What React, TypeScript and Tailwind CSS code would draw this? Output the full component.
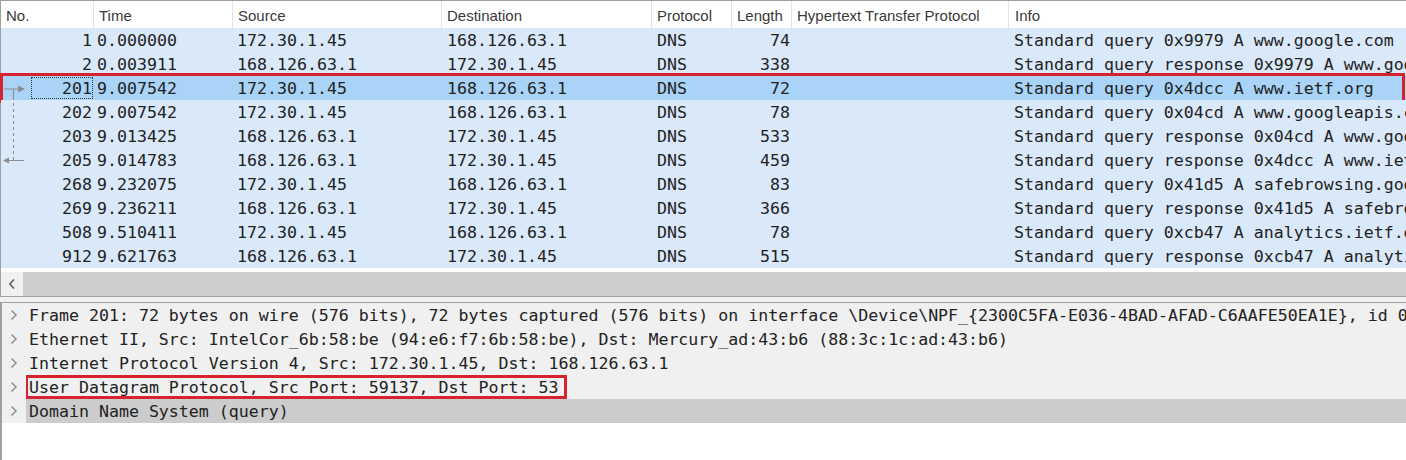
const rows = [
  { no: "1", time: "0.000000", src: "172.30.1.45", dst: "168.126.63.1", proto: "DNS", len: "74", info: "Standard query 0x9979 A www.google.com" },
  { no: "2", time: "0.003911", src: "168.126.63.1", dst: "172.30.1.45", proto: "DNS", len: "338", info: "Standard query response 0x9979 A www.google.com A 142.250.196.100" },
  { no: "201", time: "9.007542", src: "172.30.1.45", dst: "168.126.63.1", proto: "DNS", len: "72", info: "Standard query 0x4dcc A www.ietf.org", selected: true },
  { no: "202", time: "9.007542", src: "172.30.1.45", dst: "168.126.63.1", proto: "DNS", len: "78", info: "Standard query 0x04cd A www.googleapis.com" },
  { no: "203", time: "9.013425", src: "168.126.63.1", dst: "172.30.1.45", proto: "DNS", len: "533", info: "Standard query response 0x04cd A www.googleapis.com" },
  { no: "205", time: "9.014783", src: "168.126.63.1", dst: "172.30.1.45", proto: "DNS", len: "459", info: "Standard query response 0x4dcc A www.ietf.org" },
  { no: "268", time: "9.232075", src: "172.30.1.45", dst: "168.126.63.1", proto: "DNS", len: "83", info: "Standard query 0x41d5 A safebrowsing.googleapis.com" },
  { no: "269", time: "9.236211", src: "168.126.63.1", dst: "172.30.1.45", proto: "DNS", len: "366", info: "Standard query response 0x41d5 A safebrowsing.googleapis.com" },
  { no: "508", time: "9.510411", src: "172.30.1.45", dst: "168.126.63.1", proto: "DNS", len: "78", info: "Standard query 0xcb47 A analytics.ietf.org" },
  { no: "912", time: "9.621763", src: "168.126.63.1", dst: "172.30.1.45", proto: "DNS", len: "515", info: "Standard query response 0xcb47 A analytics.ietf.org" },
];

const details = [
  "Frame 201: 72 bytes on wire (576 bits), 72 bytes captured (576 bits) on interface \\Device\\NPF_{2300C5FA-E036-4BAD-AFAD-C6AAFE50EA1E}, id 0",
  "Ethernet II, Src: IntelCor_6b:58:be (94:e6:f7:6b:58:be), Dst: Mercury_ad:43:b6 (88:3c:1c:ad:43:b6)",
  "Internet Protocol Version 4, Src: 172.30.1.45, Dst: 168.126.63.1",
  "User Datagram Protocol, Src Port: 59137, Dst Port: 53",
  "Domain Name System (query)",
];

function Chevron() {
  return (
    <svg width="8" height="12" viewBox="0 0 8 12" className="shrink-0">
      <path d="M1.5 1.5 L6 6 L1.5 10.5" fill="none" stroke="#8a8a8a" strokeWidth="1.4" />
    </svg>
  );
}

function HeaderCell({ w, label }: { w: string; label: string }) {
  return (
    <div className={`${w} shrink-0 h-full pl-[5px] pt-[3px] flex items-center border-r border-[#e3e3e3]`}>{label}</div>
  );
}

export default function App() {
  return (
    <div className="w-[1406px] h-[460px] bg-white overflow-hidden flex flex-col text-[#1e1e1e]">
      {/* packet list */}
      <div className="relative border-t border-l border-[#a0a0a0] shrink-0">
        <div className="flex h-[27px] text-[15px] text-[#3a3a3a] font-['Liberation_Sans',sans-serif]">
          <HeaderCell w="w-[93px]" label="No." />
          <HeaderCell w="w-[139px]" label="Time" />
          <HeaderCell w="w-[209px]" label="Source" />
          <HeaderCell w="w-[210px]" label="Destination" />
          <HeaderCell w="w-[80px]" label="Protocol" />
          <HeaderCell w="w-[60px]" label="Length" />
          <HeaderCell w="w-[217px]" label="Hypertext Transfer Protocol" />
          <div className="flex-1 pl-[6px] pt-[3px] flex items-center">Info</div>
        </div>
        <div className="font-['DejaVu_Sans_Mono',monospace] text-[16.6px] leading-[23px] text-[#222]">
          {rows.map((r) => (
            <div key={r.no} className={`relative flex h-[24px] pt-[1px] whitespace-nowrap ${r.selected ? "bg-[#a9d3f7]" : "bg-[#dae9fa]"}`}>
              <div className="w-[93px] shrink-0 pr-[2px] text-right relative">
                {r.selected && (
                  <div className="absolute left-[30px] right-[1px] top-0 bottom-[1px] border border-dotted border-[#333]" />
                )}
                <span className="relative">{r.no}</span>
              </div>
              <div className="w-[139px] shrink-0 pl-[3px]">{r.time}</div>
              <div className="w-[209px] shrink-0 pl-[4px]">{r.src}</div>
              <div className="w-[210px] shrink-0 pl-[5px]">{r.dst}</div>
              <div className="w-[80px] shrink-0 pl-[5px]">{r.proto}</div>
              <div className="w-[60px] shrink-0 pr-[2px] text-right">{r.len}</div>
              <div className="w-[217px] shrink-0" />
              <div className="flex-1 pl-[5px] overflow-hidden">{r.info}</div>
              {r.selected && (
                <div className="absolute -left-[1px] right-[1px] -top-[3px] -bottom-[3px] border-[3px] border-[#d7232d]" />
              )}
            </div>
          ))}
        </div>
        {/* related packets indicator */}
        <svg className="absolute left-0 top-[76px]" width="30" height="96" viewBox="0 0 30 96">
          <line x1="3" y1="12" x2="18" y2="12" stroke="#8c8c8c" strokeWidth="1" />
          <path d="M17 8.5 L24 12 L17 15.5 Z" fill="#8c8c8c" />
          <line x1="12.5" y1="12" x2="12.5" y2="20" stroke="#8c8c8c" strokeWidth="1" />
          <line x1="12.5" y1="20" x2="12.5" y2="83" stroke="#8c8c8c" strokeWidth="1" strokeDasharray="3 3" />
          <line x1="6" y1="83.5" x2="23" y2="83.5" stroke="#8c8c8c" strokeWidth="1" />
          <path d="M8 80.5 L2 83.5 L8 86.5 Z" fill="#8c8c8c" />
        </svg>
      </div>
      <div className="h-[4px] shrink-0 bg-white border-l border-[#a0a0a0]" />
      {/* horizontal scrollbar */}
      <div className="flex h-[25px] shrink-0 border-l border-b border-[#a0a0a0]">
        <div className="w-[22px] bg-[#f0f0f0] flex items-center justify-center">
          <svg width="8" height="12" viewBox="0 0 8 12">
            <path d="M6 1.5 L1.8 6 L6 10.5" fill="none" stroke="#555" strokeWidth="1.4" />
          </svg>
        </div>
        <div className="flex-1 bg-[#cdcdcd]" />
      </div>
      <div className="h-[6px] shrink-0 bg-[#f0f0f0] border-b border-[#a0a0a0]" />
      {/* packet details */}
      <div className="flex-1 border-l-2 border-[#a0a0a0] bg-white font-['DejaVu_Sans_Mono',monospace] text-[16.6px] leading-[23px] text-[#222]">
        {details.map((d, i) => (
          <div key={i} className="flex h-[24px] whitespace-nowrap bg-[#f0f0f0]">
            <div className="w-[24px] shrink-0 flex items-center justify-center">
              <Chevron />
            </div>
            <div className={`flex-1 pl-[3px] pt-[1px] overflow-hidden ${i === 4 ? "bg-[#cccccc]" : ""}`}>
              {i === 3 ? (
                <span className="relative inline-block">
                  {d}
                  <span className="absolute -left-[4px] -right-[8px] -top-[1px] -bottom-0 border-[3px] border-[#d7232d]" />
                </span>
              ) : (
                d
              )}
            </div>
          </div>
        ))}
      </div>
    </div>
  );
}
